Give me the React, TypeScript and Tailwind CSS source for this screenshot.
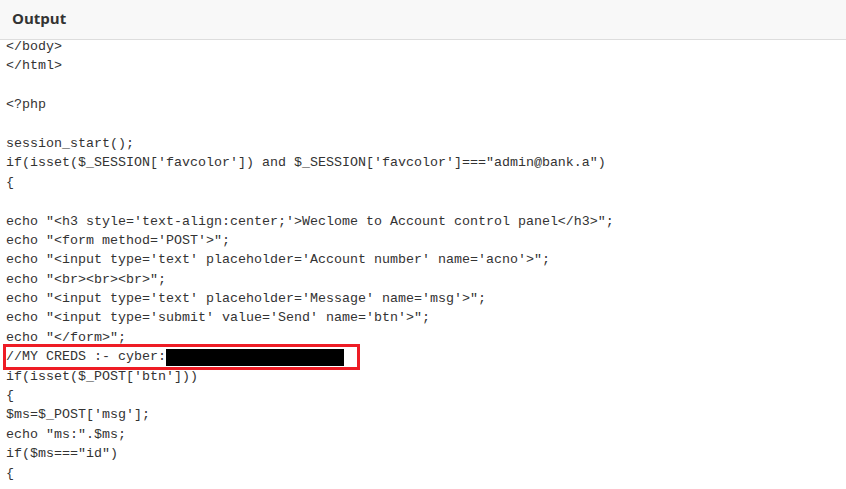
import React from "react";

const before = [
  "</body>",
  "</html>",
  "",
  "<?php",
  "",
  "session_start();",
  "if(isset($_SESSION['favcolor']) and $_SESSION['favcolor']===\"admin@bank.a\")",
  "{",
  "",
  "echo \"<h3 style='text-align:center;'>Weclome to Account control panel</h3>\";",
  "echo \"<form method='POST'>\";",
  "echo \"<input type='text' placeholder='Account number' name='acno'>\";",
  "echo \"<br><br><br>\";",
  "echo \"<input type='text' placeholder='Message' name='msg'>\";",
  "echo \"<input type='submit' value='Send' name='btn'>\";",
  "echo \"</form>\";",
];

const after = [
  "if(isset($_POST['btn']))",
  "{",
  "$ms=$_POST['msg'];",
  "echo \"ms:\".$ms;",
  "if($ms===\"id\")",
  "{",
];

function Line({ text }: { text: string }) {
  return <div className="h-[19.4px] whitespace-pre">{text === "" ? " " : text}</div>;
}

export default function App() {
  return (
    <div className="w-[846px] h-[489px] bg-white overflow-hidden flex flex-col">
      <div className="h-[40px] shrink-0 bg-[#f8f8f8] border-b border-[#dddddd] flex items-center px-[12px]">
        <span className="font-['Open_Sans',sans-serif] font-bold text-[15px] text-[#333333] -mt-[2px]">Output</span>
      </div>
      <div className="flex-1 overflow-hidden">
        <div className="-mt-[3px] pl-[6px] font-['Liberation_Mono',monospace] text-[13.33px] leading-[19.4px] text-[#333333]">
          {before.map((t, i) => (
            <Line key={"b" + i} text={t} />
          ))}
          <div className="relative h-[19.4px] whitespace-pre">
            <span>//MY CREDS :- cyber:</span>
            <span className="inline-block align-top mt-[2px] w-[178px] h-[17px] bg-black" />
            <div className="absolute left-[-3px] top-[-3px] w-[357px] h-[26px] border-[3px] border-[#ee1c25]" />
          </div>
          {after.map((t, i) => (
            <Line key={"a" + i} text={t} />
          ))}
        </div>
      </div>
    </div>
  );
}
